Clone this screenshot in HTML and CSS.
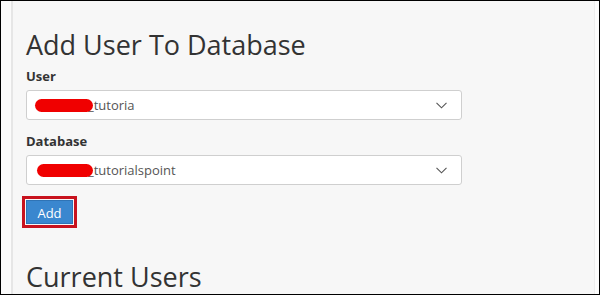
FILE: index.html
```html
<!DOCTYPE html>
<html>
<head>
<meta charset="utf-8">
<link rel="stylesheet" href="styles.css">
</head>
<body>
<div class="frame">
  <div class="sidebar"></div>
  <div class="main">
    <h1 class="title">Add User To Database</h1>
    <div class="field">
      <label class="label">User</label>
      <div class="select">
        <span class="redact"></span>
        <span class="value">_tutoria</span>
        <svg class="chev" width="11" height="7" viewBox="0 0 11 7"><polyline points="0.5,0.8 5.5,5.8 10.5,0.8" fill="none" stroke="#555" stroke-width="1.1"/></svg>
      </div>
    </div>
    <div class="field second">
      <label class="label">Database</label>
      <div class="select">
        <span class="redact db"></span>
        <span class="value">_tutorialspoint</span>
        <svg class="chev" width="11" height="7" viewBox="0 0 11 7"><polyline points="0.5,0.8 5.5,5.8 10.5,0.8" fill="none" stroke="#555" stroke-width="1.1"/></svg>
      </div>
    </div>
    <button class="btn">Add</button>
    <h1 class="title current">Current Users</h1>
  </div>
  <div class="rightbar"></div>
</div>
</body>
</html>
```

FILE: styles.css
```css
html, body {
  margin: 0;
  padding: 0;
  background: #f7f7f7;
}
.frame {
  width: 600px;
  height: 295px;
  box-sizing: border-box;
  border: 1px solid #000;
  display: flex;
  overflow: hidden;
  background: #f7f7f7;
  font-family: "Open Sans", "Liberation Sans", sans-serif;
}
.sidebar {
  width: 10px;
  flex: none;
  background: #fbfbfb;
  border-right: 2px solid #e6e6e6;
}
.main {
  flex: 1;
  padding-left: 13px;
  display: flex;
  flex-direction: column;
  align-items: flex-start;
}
.rightbar {
  width: 4px;
  flex: none;
  background: #fcfcfc;
  border-left: 1px solid #ededed;
}
.title {
  margin: 27px 0 0;
  font-size: 27px;
  line-height: 34px;
  font-weight: 400;
  color: #333;
  white-space: nowrap;
}
.field {
  margin-top: 4px;
  display: flex;
  flex-direction: column;
}
.field.second {
  margin-top: 11px;
}
.label {
  font-size: 13px;
  line-height: 20px;
  font-weight: 700;
  color: #333;
  margin-bottom: 4px;
}
.select {
  width: 436px;
  height: 30px;
  box-sizing: border-box;
  border: 1px solid #cfcfcf;
  border-radius: 3px;
  background: #fff;
  display: flex;
  align-items: center;
  padding: 0 14px 0 8px;
}
.redact {
  width: 58px;
  height: 13px;
  border-radius: 7px;
  background: #f00000;
  position: relative;
  z-index: 1;
  flex: none;
}
.redact.db {
  margin-left: 2px;
  width: 56px;
}
.value {
  font-size: 13px;
  line-height: 20px;
  color: #555;
  margin-left: -5px;
  flex: 1;
}
.chev {
  flex: none;
}
.btn {
  margin-top: 15px;
  width: 47px;
  height: 29px;
  box-sizing: border-box;
  background: #3a87cf;
  border: 1px solid #2f73b5;
  border-radius: 0;
  color: #fff;
  font-family: "Open Sans", "Liberation Sans", sans-serif;
  font-size: 13px;
  padding: 1px 0 0;
  outline: 3px solid #c8121e;
  outline-offset: 1px;
}
.title.current {
  margin-top: 36px;
}
```
